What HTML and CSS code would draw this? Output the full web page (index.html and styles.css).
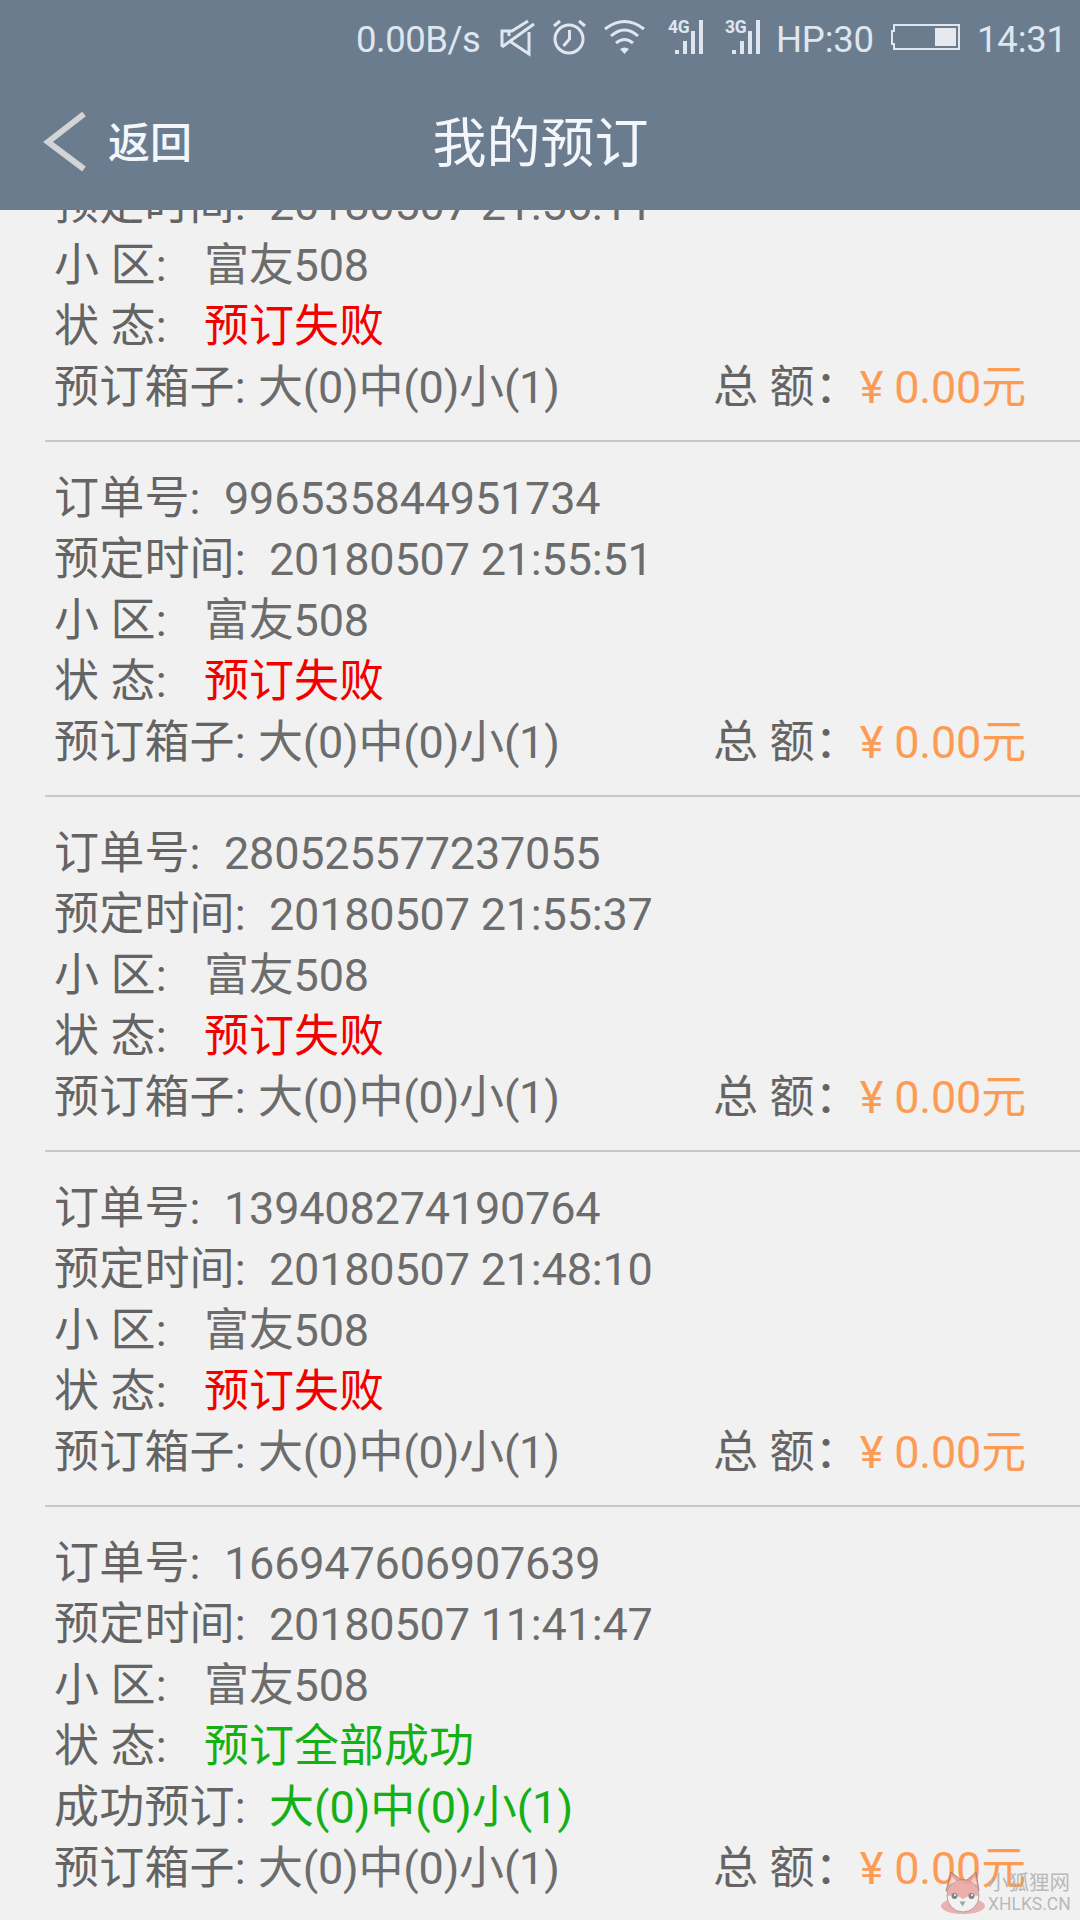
FILE: index.html
```html
<!DOCTYPE html>
<html lang="zh-CN">
<head>
    <meta charset="UTF-8">
    <meta name="viewport" content="width=device-width, initial-scale=1.0">
    <title>我的预订</title>
    <link rel="stylesheet" href="styles.css">
</head>
<body>
    <div class="status-bar">
        <span class="speed">0.00B/s</span>
        <svg width="38" height="40" viewBox="0 0 38 40" fill="none" stroke="#dfe6f0" stroke-width="3">
            <path d="M3 28V12h10L29 2M10 12v5M3 28L35 5M12 23l18 12V13"/>
        </svg>
        <svg width="38" height="40" viewBox="0 0 38 40" fill="none" stroke="#dfe6f0" stroke-width="3">
            <circle cx="18" cy="20" r="14"/>
            <path d="M18.500 11v9l-6 7M3 7l6-5M28 2l6 5"/>
        </svg>
        <svg width="46" height="40" viewBox="0 0 46 40" fill="none" stroke="#dfe6f0" stroke-width="3">
            <path d="M3 10Q22.500 -5 42 10M9 17Q22.500 5 36 17M14 24Q22.500 17 31 24"/>
            <path d="M18 30q4.500-3 9 0l-4.500 5z" fill="#dfe6f0" stroke="none"/>
        </svg>
        <div class="signal">
            <svg width="38" height="40" viewBox="0 0 38 40" fill="#dfe6f0">
                <path d="M8 31h4v4H8zM16 22h4v13h-4zM24 12h4v23h-4zM32 1h4v34h-4z"/>
            </svg>
            <b>4G</b>
        </div>
        <div class="signal">
            <svg width="38" height="40" viewBox="0 0 38 40" fill="#dfe6f0">
                <path d="M8 31h4v4H8zM16 22h4v13h-4zM24 12h4v23h-4zM32 1h4v34h-4z"/>
            </svg>
            <b>3G</b>
        </div>
        <span>HP:30</span>
        <svg width="72" height="40" viewBox="0 0 72 40" fill="none" stroke="#dfe6f0" stroke-width="2">
            <path d="M4 12V6h65v24H4v-5H2V12h3"/>
            <path d="M45 9h21v18H45z" fill="#e6e9ee" stroke="none"/>
        </svg>
        <span>14:31</span>
    </div>

    <div class="header">
        <div class="back">
            <svg width="46" height="62" viewBox="0 0 46 62" fill="none" stroke="#d2d4d6" stroke-width="6">
                <path d="M42 3L6 31l36 27"/>
            </svg>
            <span>返回</span>
        </div>
        <h1>我的预订</h1>
    </div>

    <div class="orders">
        <div class="order">
            <p><label class="long">预定时间:</label>20180507 21:56:11</p>
            <p><label class="short">小 区:</label>富友508</p>
            <p><label class="short">状 态:</label><span class="fail">预订失败</span></p>
            <p class="total"><span><label class="box">预订箱子:</label>大(0)中(0)小(1)</span><span class="sum"><label>总 额：</label><span class="price">¥ 0.00元</span></span></p>
        </div>
        <div class="order">
            <p><label class="number">订单号:</label>996535844951734</p>
            <p><label class="long">预定时间:</label>20180507 21:55:51</p>
            <p><label class="short">小 区:</label>富友508</p>
            <p><label class="short">状 态:</label><span class="fail">预订失败</span></p>
            <p class="total"><span><label class="box">预订箱子:</label>大(0)中(0)小(1)</span><span class="sum"><label>总 额：</label><span class="price">¥ 0.00元</span></span></p>
        </div>
        <div class="order">
            <p><label class="number">订单号:</label>280525577237055</p>
            <p><label class="long">预定时间:</label>20180507 21:55:37</p>
            <p><label class="short">小 区:</label>富友508</p>
            <p><label class="short">状 态:</label><span class="fail">预订失败</span></p>
            <p class="total"><span><label class="box">预订箱子:</label>大(0)中(0)小(1)</span><span class="sum"><label>总 额：</label><span class="price">¥ 0.00元</span></span></p>
        </div>
        <div class="order">
            <p><label class="number">订单号:</label>139408274190764</p>
            <p><label class="long">预定时间:</label>20180507 21:48:10</p>
            <p><label class="short">小 区:</label>富友508</p>
            <p><label class="short">状 态:</label><span class="fail">预订失败</span></p>
            <p class="total"><span><label class="box">预订箱子:</label>大(0)中(0)小(1)</span><span class="sum"><label>总 额：</label><span class="price">¥ 0.00元</span></span></p>
        </div>
        <div class="order">
            <p><label class="number">订单号:</label>166947606907639</p>
            <p><label class="long">预定时间:</label>20180507 11:41:47</p>
            <p><label class="short">小 区:</label>富友508</p>
            <p><label class="short">状 态:</label><span class="success">预订全部成功</span></p>
            <p><label class="long">成功预订:</label><span class="success">大(0)中(0)小(1)</span></p>
            <p class="total"><span><label class="box">预订箱子:</label>大(0)中(0)小(1)</span><span class="sum"><label>总 额：</label><span class="price">¥ 0.00元</span></span></p>
        </div>
    </div>

    <div class="watermark">
        <svg width="46" height="46" viewBox="0 0 46 46">
            <ellipse cx="23" cy="36" rx="22" ry="8" fill="#e8a6a6"/>
            <path d="M6 21L11 2l10 8h6l9-8 3 19z" fill="#e99386" stroke="#a8736c"/>
            <path d="M9 14l3-8 5 6zM30 12l5-6 2 9z" fill="#f8d3c6"/>
            <circle cx="23" cy="26" r="16" fill="#f5f1f1" stroke="#a59090"/>
            <path d="M7.500 26a15.500 15.500 0 0 1 31 0l-8-1-7.500 4-7-4z" fill="#e9a3a1"/>
            <circle cx="14.500" cy="26" r="3" fill="#707476"/>
            <circle cx="31.500" cy="26" r="3" fill="#707476"/>
            <circle cx="15" cy="25" r="1" fill="#fff"/>
            <circle cx="32" cy="25" r="1" fill="#fff"/>
            <path d="M19.500 31.500h6l-3 5z" fill="#8d9798"/>
        </svg>
        <div class="watermark-text">
            <span>小狐狸网</span>
            <span class="domain">XHLKS.CN</span>
        </div>
    </div>
</body>
</html>
```
FILE: styles.css
```css
* {
    box-sizing: border-box;
}
body {
    margin: 0;
    height: 1920px;
    display: flex;
    flex-direction: column;
    overflow: hidden;
    background: #f1f1f1;
    color: #6c6c6c;
    font-family: Roboto, "Noto Sans CJK SC", sans-serif;
}
.status-bar {
    flex: none;
    height: 75px;
    padding: 19px 0 0 356px;
    display: grid;
    grid-template-columns: 143px 52px 51px 65px 57px 52px 114px 87px auto;
    background: #6c7c8f;
    color: #dfe6f0;
    font-size: 36.5px;
    line-height: 42px;
    letter-spacing: -0.2px;
    white-space: nowrap;
}
.speed {
    letter-spacing: -0.5px;
}
.signal {
    position: relative;
}
.signal b {
    position: absolute;
    left: 1px;
    top: -1px;
    font-size: 17.5px;
    line-height: 18px;
}
.header {
    flex: none;
    height: 135px;
    padding: 0 41px 0 42px;
    display: grid;
    grid-template-columns: 1fr auto 1fr;
    align-items: center;
    background: #6c7c8f;
    color: #f3f6fb;
}
.header h1 {
    margin: 0;
    padding-top: 5px;
    font-size: 54px;
    font-weight: normal;
    line-height: 60px;
}
.back {
    display: flex;
    align-items: center;
    gap: 20px;
    font-size: 42px;
    font-weight: 500;
    line-height: 60px;
}
.back span {
    padding-top: 2px;
}
.back svg {
    margin-bottom: 2px;
}
.orders {
    flex: 1;
    min-height: 0;
    display: flex;
    flex-direction: column;
    justify-content: flex-end;
    overflow: hidden;
}
.order {
    flex: none;
    margin-left: 45px;
    padding: 26px 54px 22px 9px;
    border-bottom: 2px solid #c8c8c8;
    font-size: 45px;
    line-height: 61px;
    letter-spacing: -0.2px;
    white-space: nowrap;
}
.order:last-child {
    border-bottom: none;
    padding-bottom: 21px;
}
.order p {
    margin: 0;
    height: 61px;
}
.order label {
    display: inline-block;
    color: #646464;
    letter-spacing: 0.2px;
}
.order .number {
    width: 170px;
}
.order .long {
    width: 215px;
}
.order .short {
    width: 150px;
}
.order .box {
    width: 204px;
}
.order .total {
    display: flex;
    justify-content: space-between;
}
.fail {
    color: #f20000;
    letter-spacing: 0;
}
.success {
    color: #14b014;
    letter-spacing: 0;
}
.price {
    color: #fc9c54;
}
.watermark {
    position: absolute;
    left: 940px;
    top: 1870px;
    display: flex;
    gap: 2px;
    opacity: 0.85;
}
.watermark-text {
    display: flex;
    flex-direction: column;
    color: #b0b0b0;
    font-size: 20.5px;
    line-height: 26px;
}
.domain {
    font-size: 17.5px;
    line-height: 17px;
}
```
